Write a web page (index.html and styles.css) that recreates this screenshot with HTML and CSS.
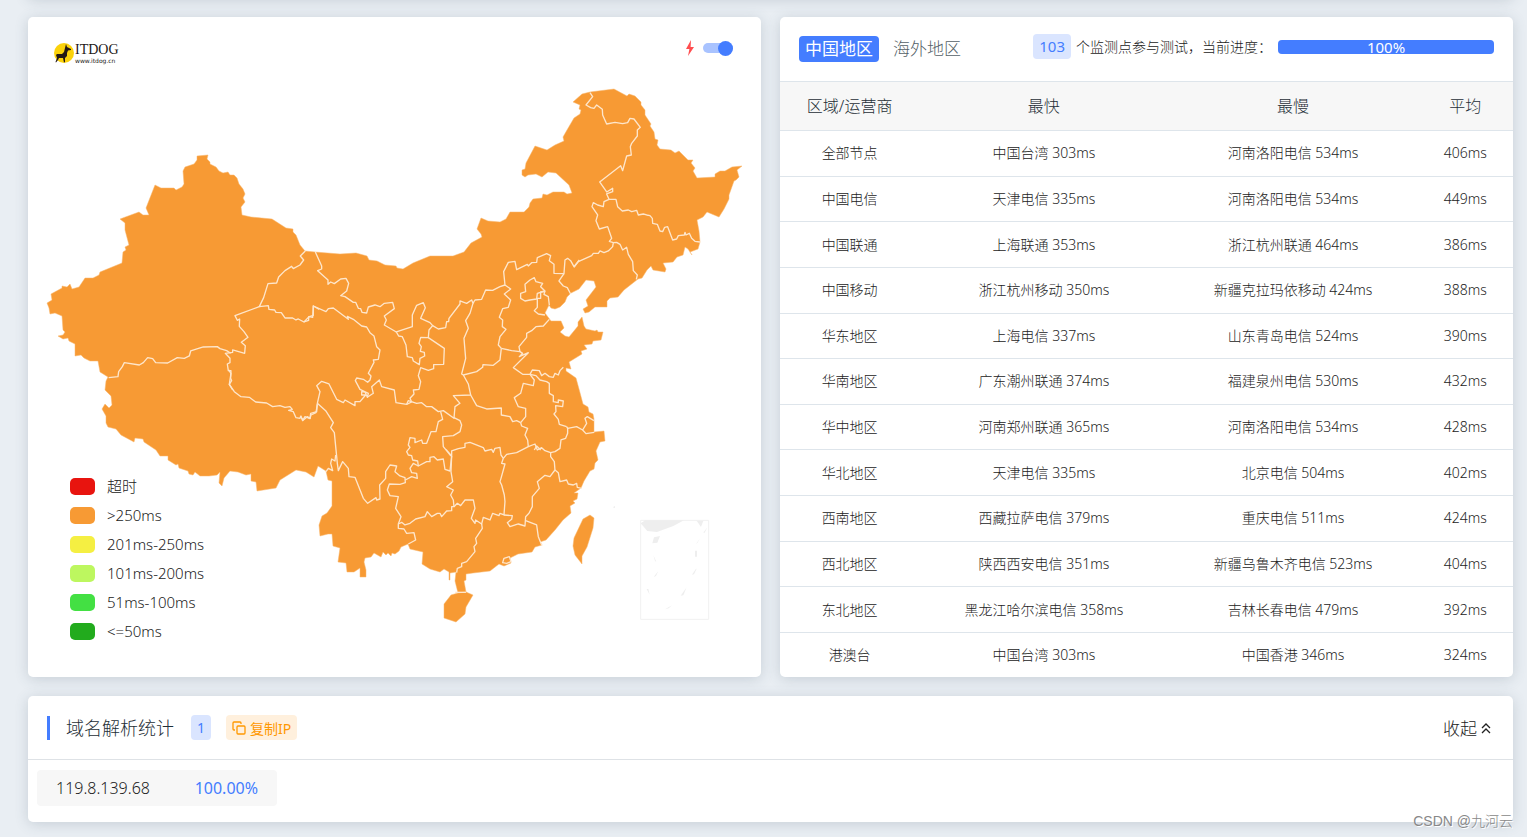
FILE: index.html
```html
<!DOCTYPE html>
<html lang="zh-CN">
<head>
    <meta charset="UTF-8">
    <meta name="viewport" content="width=device-width, initial-scale=1.0">
    <title>ITDOG</title>
    <link rel="stylesheet" href="styles.css">
</head>
<body>
    <div class="page">
        <div class="card card-above"></div>

        <div class="row">
            <!-- 地图 -->
            <div class="card map-card">
                <svg class="map" viewBox="28 17 733 660" role="img" aria-label="map">
                    <g class="land">
                        <path d="M47 303L52 300 51 294 62 288 62 286 67 287 70 284 72 289 79 287 85 278 93 278 99 275 100 272 122 263 123 252 126 250 125 247 129 245 125 230 125 223 120 219 139 212 143 215 149 215 146 208 155 185 161 188 174 188 176 190 182 187 184 184 183 171 185 167 194 164 197 160 197 156 208 155 207 159 210 162 210 164 216 167 219 171 223 173 228 172 230 175 234 175 237 178 239 184 243 189 245 194 243 198 245 202 241 207 242 215 251 217 272 219 286 228 293 229 293 232 296 235 300 245 305 251 315 252 340 254 356 253 367 256 369 260 377 261 385 265 396 266 397 268 403 269 413 263 430 256 453 256 464 252 471 243 482 237 481 234 477 229 481 218 488 221 500 222 506 219 510 212 524 212 529 207 530 203 533 199 542 198 543 194 547 195 553 192 564 192 567 194 572 193 569 185 556 173 548 172 542 177 536 174 528 175 525 177 522 175 522 170 525 169 526 163 535 146 547 150 555 145 564 141 563 137 567 130 574 118 580 114 581 110 579 109 580 105 573 102 582 94 590 92 614 89 627 96 629 94 635 96 641 102 641 105 645 110 645 115 651 124 650 126 654 132 655 139 658 140 657 145 660 149 671 150 675 153 679 151 688 160 693 160 691 163 695 168 693 171 697 178 715 177 715 174 720 171 725 171 732 167 742 166 737 170 739 177 736 180 734 181 729 195 729 199 724 209 719 217 707 212 703 217 697 220 699 231 700 242 698 249 690 252 692 255 688 249 685 247 683 255 677 257 673 262 663 263 666 269 665 272 653 270 651 266 647 270 642 278 638 279 624 290 618 297 610 298 607 301 607 307 595 307 589 312 585 313 583 309 588 306 586 300 596 287 594 281 586 280 579 289 571 293 567 297 565 302 560 307 555 309 551 308 549 305 545 313 551 321 561 321 564 328 560 332 565 336 569 337 578 326 578 322 582 317 584 326 586 329 595 331 597 330 598 332 603 332 601 340 593 341 592 344 584 345 587 349 581 351 582 354 569 362 571 369 566 368 566 371 576 378 579 389 583 404 588 407 589 412 593 414 594 419 594 432 604 431 605 441 600 442 596 451 598 460 595 463 594 469 590 471 584 481 581 488 574 493 578 493 577 499 573 501 575 503 570 506 571 513 563 520 555 530 546 540 540 542 542 545 535 547 532 552 518 554 510 558 511 563 504 566 499 564 490 571 473 573 466 574 466 580 464 581 466 592 458 593 455 581 456 572 450 573 450 580 449 580 449 572 444 569 440 572 430 569 422 564 423 552 410 549 408 544 401 547 399 551 395 554 392 553 391 556 388 553 386 555 383 552 381 557 374 553 371 557 365 558 364 562 366 570 366 577 360 577 360 568 354 572 347 572 346 563 338 562 340 548 333 546 332 534 328 534 320 536 319 525 322 516 327 513 332 506 332 481 328 480 326 471 318 466 314 477 306 472 296 470 280 480 276 488 257 491 256 482 251 481 251 474 246 475 238 472 230 471 224 478 222 486 219 483 220 472 217 475 209 476 200 476 195 472 193 475 189 474 188 471 179 468 178 464 176 465 168 460 168 456 160 456 156 450 144 442 143 439 135 438 134 442 121 435 116 429 108 427 106 423 106 416 102 409 105 404 109 408 112 405 111 396 105 390 106 381 108 377 100 372 98 361 90 361 84 358 81 355 75 356 75 344 69 341 68 338 63 339 58 336 63 335 65 332 63 330 62 316 55 313 50 314 49 308Z"/>
                        <path d="M466 592L473 595 466 607 465 614 456 622 444 618 444 604 451 595 458 593Z"/>
                        <path d="M590 515L594 518 593 528 587 547 582 556 582 564 575 555 573 546 574 538 583 519Z"/>
                    </g>
                    <!-- 省界 -->
                    <g class="borders">
                        <!-- 西北 -->
                        <g transform="translate(40 140) scale(.3333)">
                            <path d="M796 333L781 348 791 360 780 375 760 386 755 379 735 392 716 411 710 429 684 431 671 473 658 500 685 497 687 508 704 510 708 517 724 518 735 534 758 534 768 540 775 537 792 546 806 541 806 531 820 526 820 498 838 508"/>
                            <path d="M658 500L585 527 592 541 599 537 598 559 612 575 624 592 604 607 616 617 614 640 578 630 578 637 556 640 570 655 570 668 562 672 565 692 573 692 572 715 575 722 568 733 578 750"/>
                            <path d="M206 713L234 710 236 695 247 680 253 668 298 675 310 668 323 653 338 656 347 668 383 669 412 653 433 655 448 648 452 633 490 621 532 620 540 626 560 632 572 640"/>
                        </g>
                        <!-- 青藏 -->
                        <g transform="translate(90 370) scale(.3333)">
                            <path d="M416 0L423 10 418 43 433 65 453 80 478 82 497 96 530 99 548 110 570 107 585 112 600 110 607 118 596 121 610 125 618 143 630 145 633 138 638 152 645 140 660 146 663 135 678 128 682 103"/>
                        </g>
                        <!-- 华北 -->
                        <g transform="translate(300 230) scale(.3333)">
                            <path d="M46 66L65 108 65 117 53 122 84 150 84 163 92 156 103 161 122 147 138 145 146 160 140 183 122 197 135 200 160 217 167 217 175 235 182 236 186 247 200 249 205 231 225 225 240 230 253 220 278 217 283 236 253 258 259 270 253 285 289 306"/>
                            <path d="M289 306L337 290 337 255 350 226 370 218 376 233 362 265 390 278 398 287 387 300 385 323 362 322 357 340 364 350 361 364 373 367 374 378 360 385 358 404 340 393 337 383 322 380 318 345 307 320 296 318Z"/>
                            <path d="M385 323L433 355 431 403 401 404 401 416 385 421 362 413 355 437 362 455 357 478 340 480 342 492 330 505 335 516 320 523"/>
                            <path d="M398 287L415 297 437 293 440 275 446 275 447 265 480 222 480 213 500 220 515 210 519 220 525 210 545 208 557 180 578 181 600 170 615 165"/>
                            <path d="M12 276L27 260 38 262 40 228 78 245 85 236 100 234 145 268 142 259 160 268 185 288 200 291 210 308 222 318 230 350 240 360 235 388 220 390 222 397 205 430 213 438 210 450 203 457 190 448 170 444 166 452 180 478 205 490 202 502 195 486 185 485 185 495 197 495 180 515 165 515 165 527 135 510 130 518 110 508 87 462 65 454 50 467 60 485 52 520 50 545 32 550 30 565 22 560 10 570 0 560"/>
                            <path d="M202 502L220 490 215 470 238 450 245 470 283 480 288 518 320 523 325 512 350 520 365 518 380 530 395 530 415 545 430 542 462 565 465 530 480 520 460 497 512 495 505 462 490 435"/>
                            <path d="M519 220L510 250 497 272 505 295 492 325 497 385 485 432 490 435 530 425 548 412 549 404 580 406 600 390 604 355"/>
                            <path d="M604 355L595 345 600 320 618 298 607 290 608 270 598 262 608 236 625 232 632 210 613 192 632 177 615 165 611 125 625 97 645 94 650 119 682 103 685 108 695 98 710 97 712 83 740 71 752 77 748 92 762 103 762 130 792 131 795 90 803 85 812 92 822 110 838 90"/>
                            <path d="M792 131L777 153 790 168 802 173 812 192"/>
                            <path d="M703 143L708 155 728 160 722 170 735 183 712 190 710 207 690 210 675 213 662 205 662 190 677 185 675 163 690 150Z"/>
                            <path d="M735 183L722 186 722 205 712 205 712 232 703 242 715 252 735 255M735 183L732 193 745 200 748 225"/>
                            <path d="M748 268L730 288 708 290 695 302 680 310 680 322 657 350 660 365 635 362 604 355"/>
                            <path d="M660 365L668 370 658 380 685 368 640 413 668 433 690 433 697 420 718 422 725 437 735 430 748 440 760 442 765 430 775 435 780 422 790 412"/>
                            <path d="M690 433L703 450 700 467 670 460 662 490 643 503 655 530 677 535 677 560 662 578"/>
                            <path d="M690 433L708 437 720 450 740 455 748 460 748 490 760 497 760 515 775 518 775 510 790 513 788 530 767 527 768 545 762 552 775 568 778 583 800 590"/>
                            <path d="M512 495L530 527 560 537 604 534 604 555 630 560 638 575 650 572 662 578"/>
                        </g>
                        <!-- 东北 -->
                        <g transform="translate(500 80) scale(.3333)">
                            <path d="M270 38L278 50 258 75 272 83 282 85 290 75 307 88 308 105 320 132 345 127 368 131 383 128 390 115 402 117 421 142 412 150 412 168 395 190 391 200 394 225 380 228 368 272 362 257 299 306 320 336 338 325 338 335 320 342 327 358"/>
                            <path d="M327 358L312 365 310 380 293 375 280 368 276 380 293 405 288 422 298 447 323 440 335 475 328 484 340 488 338 500 325 513 312 518 300 513 295 520 280 520 275 527 235 545 222 562"/>
                            <path d="M327 358L348 358 353 380 367 393 385 390 395 395 410 391 415 405 430 402 440 405 450 407 457 415 458 430 472 433 480 453 488 455 494 442 503 440 518 480 530 477 535 467 553 465 555 457 558 465 568 460 575 475 585 484 600 486"/>
                            <path d="M340 488L350 487 360 493 368 510 380 502 385 523 398 545 400 572 412 585 409 598"/>
                        </g>
                        <!-- 南方 -->
                        <g transform="translate(300 400) scale(.3333)">
                            <path d="M52 10L77 32 100 68 92 83 103 98 112 190 115 212 128 185 145 205 147 230 165 232 190 295 203 310 228 293 230 300 240 297 239 255 257 235 257 215 270 195 290 198 285 215 300 228 315 233 316 248 300 253 268 252 262 270 270 287 295 290 287 325 303 350 295 372"/>
                            <path d="M107 165L105 183 95 177 92 190 98 212 85 205 78 215"/>
                            <path d="M422 35L428 58 415 65 408 95 393 95 380 130 368 130 365 120 345 128 345 115 330 113 325 135 330 142 320 155 325 165 335 167 338 180 353 183 355 198 380 185 390 185 390 172 402 170 412 180 430 177 435 208 450 213 455 168"/>
                            <path d="M355 198L340 190 330 205 335 218 350 220 352 235 335 230 316 240"/>
                            <path d="M462 53L480 62 485 75 480 95 460 107 428 110 430 140 453 168M455 168L438 148"/>
                            <path d="M455 168L455 153 475 146 495 142 495 130 510 127 550 143 555 153 575 148 580 157 585 145 600 142 603 165 610 175 605 190 615 192 603 235 600 245 605 255 613 285 615 305 612 345 600 340 597 347 578 340 570 360 550 352 545 372 527 360 525 370 514 355 525 325 520 300 495 300 482 317 472 310 462 320"/>
                            <path d="M455 168L453 215 458 245 440 260 460 270 452 285 460 300 462 320 455 320 455 332 440 333 425 350 420 340 412 340 395 350 382 335 375 350 347 357 330 370 315 375 305 367 295 372 295 385 312 387 320 400 342 398 347 420 325 432"/>
                            <path d="M545 372L547 385 527 415 530 430 522 440 525 455 500 485 485 490 485 500 472 505 470 518"/>
                            <path d="M612 345L637 347 635 358 622 368 630 380 655 372 675 378 677 350 687 340 697 320 697 290 718 265 712 245 735 226 750 230 765 210"/>
                            <path d="M677 362L710 375 715 410 726 437"/>
                            <path d="M610 175L620 163 650 158 685 140 705 132 712 150 725 143 735 152 752 158 752 170 763 185 765 210"/>
                            <path d="M662 68L665 78 683 85 675 105 683 120 685 140M703 150L710 138 722 150"/>
                            <path d="M765 210L775 218 780 245 800 240 805 252 820 255 830 250 832 262 845 265"/>
                            <path d="M752 158L765 155 780 145 783 120 797 115 803 100 803 83"/>
                            <path d="M800 80L803 85 830 80 848 90 858 101 883 97M848 90L860 70 855 55 862 50 882 62"/>
                            <path d="M612 475L628 470 633 485 620 490 608 488Z"/>
                            <path d="M466 577L498 577"/>
                        </g>
                    </g>
                    <!-- 南海诸岛 -->
                    <g class="islands" transform="translate(600 480) scale(.3333)">
                        <path class="inset" d="M122 121H326V418H122Z"/>
                        <path d="M122 130L136 121H252L220 138 171 156 142 153ZM290 122H310L303 141ZM162 172L180 168 172 188 157 190ZM38 82L45 78V84ZM285 212H291V230H285Z"/>
                        <path d="M322 142L310 158 314 158ZM300 175L288 192 292 189ZM160 225L169 245 165 243ZM161 291L175 273 168 288ZM288 266L276 284 282 283 290 266ZM140 327H145L149 344ZM242 347L260 322 250 346ZM195 388L216 376 206 385Z"/>
                    </g>
                </svg>

                <svg class="logo" viewBox="0 0 72 24" role="img" aria-label="ITDOG">
                    <circle cx="11" cy="12" r="10" fill="#fbd20b"/>
                    <path d="M13 3L14 6 18 8 18 9 15 9.500 14 12 14 15 12 17 12 21 11 21.500 10 17 6 17 5 19 3 21.500 2.500 21 4 17 3 14 4 13 9 13 11 11 12 7Z" fill="#231815"/>
                    <text class="logo-name" x="22" y="13">ITDOG</text>
                    <text class="logo-url" x="22" y="22">www.itdog.cn</text>
                </svg>

                <label class="fast">
                    <svg class="bolt" viewBox="0 0 8 16" aria-hidden="true"><path d="M5 0L0 9h3.400L2 16l6-9H4.600z" fill="#ff4d4f"/></svg>
                    <input type="checkbox" class="switch" aria-label="fast" checked>
                </label>

                <ul class="legend">
                    <li><i class="c-timeout"></i>超时</li>
                    <li><i class="c-250"></i>&gt;250ms</li>
                    <li><i class="c-201"></i>201ms-250ms</li>
                    <li><i class="c-101"></i>101ms-200ms</li>
                    <li><i class="c-51"></i>51ms-100ms</li>
                    <li><i class="c-50"></i>&lt;=50ms</li>
                </ul>
            </div>

            <!-- 统计表 -->
            <div class="card stat-card">
                <div class="stat-head">
                    <div class="tabs">
                        <button type="button" class="tab active">中国地区</button>
                        <button type="button" class="tab">海外地区</button>
                    </div>
                    <div class="task">
                        <span class="badge badge-lg">103</span>
                        <span>个监测点参与测试，当前进度：</span>
                        <div class="progress"><div class="progress-bar" style="width: 100%">100%</div></div>
                    </div>
                </div>
                <div class="table-wrap">
                    <table>
                        <thead>
                            <tr><th class="col-name">区域/运营商</th><th class="col-node">最快</th><th class="col-node">最慢</th><th class="col-avg">平均</th></tr>
                        </thead>
                        <tbody>
                            <tr><td>全部节点</td><td>中国台湾 303ms</td><td>河南洛阳电信 534ms</td><td>406ms</td></tr>
                            <tr><td>中国电信</td><td>天津电信 335ms</td><td>河南洛阳电信 534ms</td><td>449ms</td></tr>
                            <tr><td>中国联通</td><td>上海联通 353ms</td><td>浙江杭州联通 464ms</td><td>386ms</td></tr>
                            <tr><td>中国移动</td><td>浙江杭州移动 350ms</td><td>新疆克拉玛依移动 424ms</td><td>388ms</td></tr>
                            <tr><td>华东地区</td><td>上海电信 337ms</td><td>山东青岛电信 524ms</td><td>390ms</td></tr>
                            <tr><td>华南地区</td><td>广东潮州联通 374ms</td><td>福建泉州电信 530ms</td><td>432ms</td></tr>
                            <tr><td>华中地区</td><td>河南郑州联通 365ms</td><td>河南洛阳电信 534ms</td><td>428ms</td></tr>
                            <tr><td>华北地区</td><td>天津电信 335ms</td><td>北京电信 504ms</td><td>402ms</td></tr>
                            <tr><td>西南地区</td><td>西藏拉萨电信 379ms</td><td>重庆电信 511ms</td><td>424ms</td></tr>
                            <tr><td>西北地区</td><td>陕西西安电信 351ms</td><td>新疆乌鲁木齐电信 523ms</td><td>404ms</td></tr>
                            <tr><td>东北地区</td><td>黑龙江哈尔滨电信 358ms</td><td>吉林长春电信 479ms</td><td>392ms</td></tr>
                            <tr><td>港澳台</td><td>中国台湾 303ms</td><td>中国香港 346ms</td><td>324ms</td></tr>
                        </tbody>
                    </table>
                </div>
            </div>
        </div>

        <!-- 域名解析统计 -->
        <div class="card dns-card">
            <div class="dns-head">
                <h2>域名解析统计</h2>
                <span class="badge">1</span>
                <button type="button" class="copy">
                    <svg viewBox="0 0 14 14" aria-hidden="true"><rect x="5" y="5" width="8" height="8" rx="1"/><path d="M3 9H2a1 1 0 0 1-1-1V2a1 1 0 0 1 1-1h6a1 1 0 0 1 1 1v1"/></svg>复制IP
                </button>
                <button type="button" class="collapse">收起<svg viewBox="0 0 10 12" aria-hidden="true"><path d="M1 6l4-4 4 4M1 11l4-4 4 4"/></svg></button>
            </div>
            <div class="dns-body">
                <div class="ip-item"><span>119.8.139.68</span><span class="percent">100.00%</span></div>
            </div>
        </div>
    </div>
    <div class="watermark">CSDN @九河云</div>
</body>
</html>
```
FILE: styles.css
```css
* {
    box-sizing: border-box;
}
body {
    position: relative;
    margin: 0;
    background: #e9eef3;
    color: #222;
    font-family: "Noto Sans", "Noto Sans CJK SC", sans-serif;
    font-size: 14px;
    font-weight: 300;
    line-height: 20px;
}
button {
    border: 0;
    background: none;
    font-family: inherit;
    font-weight: inherit;
    cursor: pointer;
}
.page {
    display: flex;
    flex-direction: column;
    gap: 19px;
    padding: 0 14px 15px 28px;
    overflow: hidden;
}
.card {
    background: #fff;
    border-radius: 5px;
    box-shadow: 0 2px 14px rgba(60, 80, 100, 0.2);
}
.card-above {
    height: 40px;
    margin-top: -42px;
}
.row {
    display: grid;
    grid-template-columns: 1fr 1fr;
    gap: 19px;
}

/* map */
.map-card {
    position: relative;
}
.map {
    display: block;
    width: 100%;
}
.land {
    fill: #f79a34;
    stroke: #f9b66d;
    stroke-width: 0.5;
}
.borders path {
    fill: none;
    stroke: #fee6cb;
    stroke-width: 4;
    stroke-linejoin: round;
}
.islands {
    fill: #eee;
}
.islands .inset {
    fill: none;
    stroke: #f1f1f1;
    stroke-width: 3;
}
.logo {
    position: absolute;
    top: 24px;
    left: 25px;
    width: 72px;
    height: 24px;
    overflow: visible;
}
.logo-name {
    font-family: "Liberation Serif", serif;
    font-size: 14px;
    font-weight: 400;
    fill: #231815;
}
.logo-url {
    font-family: "DejaVu Sans", sans-serif;
    font-size: 6px;
    font-weight: 400;
    fill: #231815;
}
.fast {
    position: absolute;
    top: 23px;
    right: 28px;
    display: flex;
    align-items: center;
    gap: 9px;
    height: 16px;
}
.bolt {
    width: 8px;
    height: 16px;
}
.switch {
    display: flex;
    align-items: center;
    justify-content: flex-end;
    appearance: none;
    width: 30px;
    height: 10px;
    margin: 0;
    border-radius: 5px;
    background: #a9c3ff;
}
.switch::before {
    content: "";
    flex: none;
    width: 15px;
    height: 15px;
    border-radius: 50%;
    background: #447dff;
}
.legend {
    position: absolute;
    left: 42px;
    bottom: 32px;
    margin: 0;
    padding: 0;
    list-style: none;
    font-size: 15px;
}
.legend li {
    display: flex;
    align-items: center;
    gap: 12px;
    height: 29px;
}
.legend i {
    width: 25px;
    height: 17px;
    margin-top: 2px;
    border-radius: 5px;
}
.c-timeout { background: #e8140f; }
.c-250 { background: #f79a34; }
.c-201 { background: #f5ef42; }
.c-101 { background: #bdf75f; }
.c-51 { background: #43e043; }
.c-50 { background: #22ab1d; }

/* statistics */
.stat-card {
    display: flex;
    flex-direction: column;
}
.stat-head {
    display: flex;
    align-items: center;
    justify-content: space-between;
    height: 64px;
    padding: 0 19px;
}
.tabs {
    display: flex;
    gap: 8px;
}
.tab {
    height: 26px;
    padding: 0 6px;
    border-radius: 4px;
    color: #555f67;
    font-size: 17px;
    line-height: 26px;
}
.tab.active {
    background: #447dff;
    color: #fff;
    font-weight: 400;
}
.task {
    display: flex;
    align-items: center;
    gap: 5px;
    padding-bottom: 5px;
    white-space: nowrap;
}
.badge {
    height: 25px;
    padding: 0 6px;
    border-radius: 4px;
    background: #dae5ff;
    color: #447dff;
    font-size: 14px;
    font-weight: 400;
    line-height: 25px;
}
.badge-lg {
    font-size: 15px;
}
.progress {
    width: 216px;
    height: 14px;
    margin-left: 1px;
    border-radius: 4px;
    background: #e9ecef;
}
.progress-bar {
    height: 14px;
    border-radius: 4px;
    background: #447dff;
    color: #fff;
    font-size: 15px;
    font-weight: 400;
    line-height: 14px;
    text-align: center;
}
.table-wrap {
    flex: 1;
}
table {
    width: 100%;
    height: 100%;
    border-collapse: collapse;
    table-layout: fixed;
    text-align: center;
}
th,
td {
    padding: 0;
    border-top: 1px solid #dee5eb;
}
th {
    height: 49px;
    background: #f7f7f7;
    color: #1e2e36;
    font-size: 16px;
    font-weight: 300;
}
.col-name { width: 19%; }
.col-node { width: 34%; }
.col-avg { width: 13%; }

/* dns */
.dns-head {
    display: flex;
    align-items: center;
    height: 64px;
    padding: 0 22px 0 19px;
    border-bottom: 1px solid #dee2e6;
}
.dns-head h2 {
    margin: 0 17px 0 0;
    padding-left: 16px;
    border-left: 3px solid #447dff;
    color: #1e2e36;
    font-size: 18px;
    font-weight: 300;
    line-height: 24px;
}
.copy {
    display: flex;
    align-items: center;
    gap: 4px;
    height: 25px;
    margin-left: 15px;
    padding: 0 6px;
    border-radius: 4px;
    background: #fff0dd;
    color: #ff9800;
    font-size: 14px;
    font-weight: 400;
}
.copy svg {
    width: 14px;
    height: 14px;
}
.copy svg,
.collapse svg {
    fill: none;
    stroke: currentColor;
    stroke-width: 1.3;
}
.collapse {
    display: flex;
    align-items: center;
    gap: 4px;
    margin-left: auto;
    padding: 0;
    color: #222;
    font-size: 17px;
}
.collapse svg {
    width: 10px;
    height: 12px;
}
.dns-body {
    display: flex;
    padding: 10px 9px 16px;
}
.ip-item {
    display: flex;
    justify-content: space-between;
    width: 240px;
    padding: 0 19px;
    border-radius: 4px;
    background: #f7f7f7;
    font-size: 16px;
    line-height: 36px;
}
.percent {
    color: #447dff;
    font-weight: 400;
}
.watermark {
    position: absolute;
    right: 14px;
    bottom: 6px;
    color: #888;
    font-family: "Liberation Sans", "Noto Sans CJK SC", sans-serif;
    font-size: 14px;
    text-shadow: 1px 1px 0 #fff;
}
```
